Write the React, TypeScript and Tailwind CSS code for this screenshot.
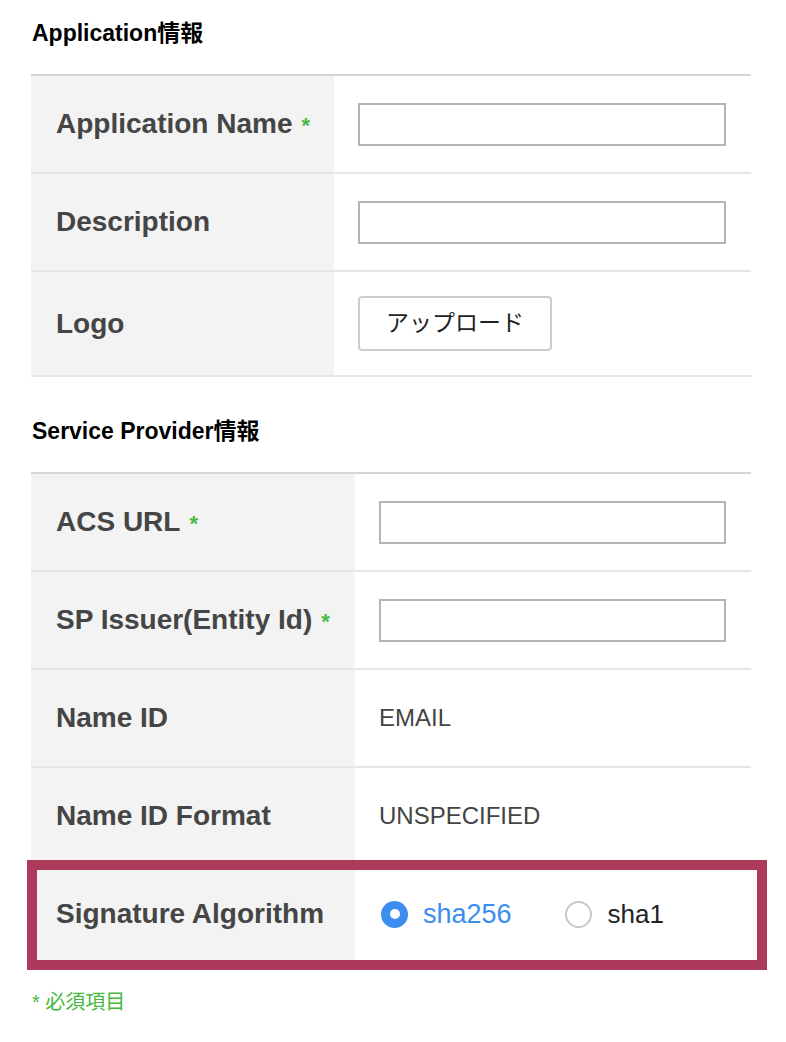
const font = "font-['Liberation_Sans','Noto_Sans_CJK_JP',sans-serif]";

function Req() {
  return <span className="ml-[9px] text-[22px] leading-none font-bold text-[#4cba46]">*</span>;
}

function Row({
  label,
  required,
  labelW,
  children,
  first,
}: {
  label: string;
  required?: boolean;
  labelW: string;
  children: React.ReactNode;
  first?: boolean;
}) {
  return (
    <div className={`flex ${first ? "" : "border-t-2 border-[#e6e6e6]"}`}>
      <div className={`${labelW} shrink-0 bg-[#f3f3f3] py-6 pl-[25px] flex items-center`}>
        <span className="h-[48px] text-[28px] leading-[48px] font-bold text-[#454545] whitespace-nowrap">
          {label}
          {required && <Req />}
        </span>
      </div>
      <div className="flex-1 flex items-center pl-6 pr-[25px] py-6">{children}</div>
    </div>
  );
}

function TextInput() {
  return <input type="text" className="h-[43px] w-full border-2 border-[#b4b4b4] bg-white outline-none" />;
}

function Value({ text }: { text: string }) {
  return <span className="text-[24px] leading-[48px] text-[#444]">{text}</span>;
}

export default function App() {
  return (
    <div className={`${font} min-h-screen bg-white pt-[17px] pl-[31px]`}>
      <div className="w-[720px]">
        <h2 className="pl-px text-[23px] leading-[32px] font-bold text-black">Application情報</h2>
        <div className="mt-[25px] border-t-2 border-b-2 border-t-[#d6d6d6] border-b-[#e6e6e6]">
          <Row label="Application Name" required labelW="w-[303px]" first>
            <TextInput />
          </Row>
          <Row label="Description" labelW="w-[303px]">
            <TextInput />
          </Row>
          <Row label="Logo" labelW="w-[303px]">
            <button className="h-[55px] rounded-[4px] border-2 border-[#cccccc] bg-white px-[26px] text-[23px] text-[#222]">
              アップロード
            </button>
          </Row>
        </div>

        <h2 className="mt-[38px] pl-px text-[23px] leading-[32px] font-bold text-black">Service Provider情報</h2>
        <div className="mt-[25px] border-t-2 border-[#d6d6d6]">
          <Row label="ACS URL" required labelW="w-[324px]" first>
            <TextInput />
          </Row>
          <Row label="SP Issuer(Entity Id)" required labelW="w-[324px]">
            <TextInput />
          </Row>
          <Row label="Name ID" labelW="w-[324px]">
            <Value text="EMAIL" />
          </Row>
          <Row label="Name ID Format" labelW="w-[324px]">
            <Value text="UNSPECIFIED" />
          </Row>
          <div className="relative">
            <Row label="Signature Algorithm" labelW="w-[324px]">
              <div className="ml-[2px] flex h-[48px] items-center">
                <label className="flex items-center gap-[15px]">
                  <span className="flex h-[27px] w-[27px] items-center justify-center rounded-full bg-[#3b8ef0]">
                    <span className="h-[10px] w-[10px] rounded-full bg-white" />
                  </span>
                  <span className="text-[27px] leading-[48px] text-[#3b8ef0]">sha256</span>
                </label>
                <label className="ml-[53px] flex items-center gap-[16px]">
                  <span className="h-[27px] w-[27px] rounded-full border-2 border-[#c8c8c8] bg-white" />
                  <span className="text-[26px] leading-[48px] text-[#222]">sha1</span>
                </label>
              </div>
            </Row>
            <div className="pointer-events-none absolute -top-[4px] -bottom-[8px] -left-[4px] -right-[16px] border-[10px] border-[#ac3a5b]" />
          </div>
        </div>

        <p className="mt-[26px] pl-px text-[20px] leading-[28px] text-[#46b83c]">* 必須項目</p>
      </div>
    </div>
  );
}
